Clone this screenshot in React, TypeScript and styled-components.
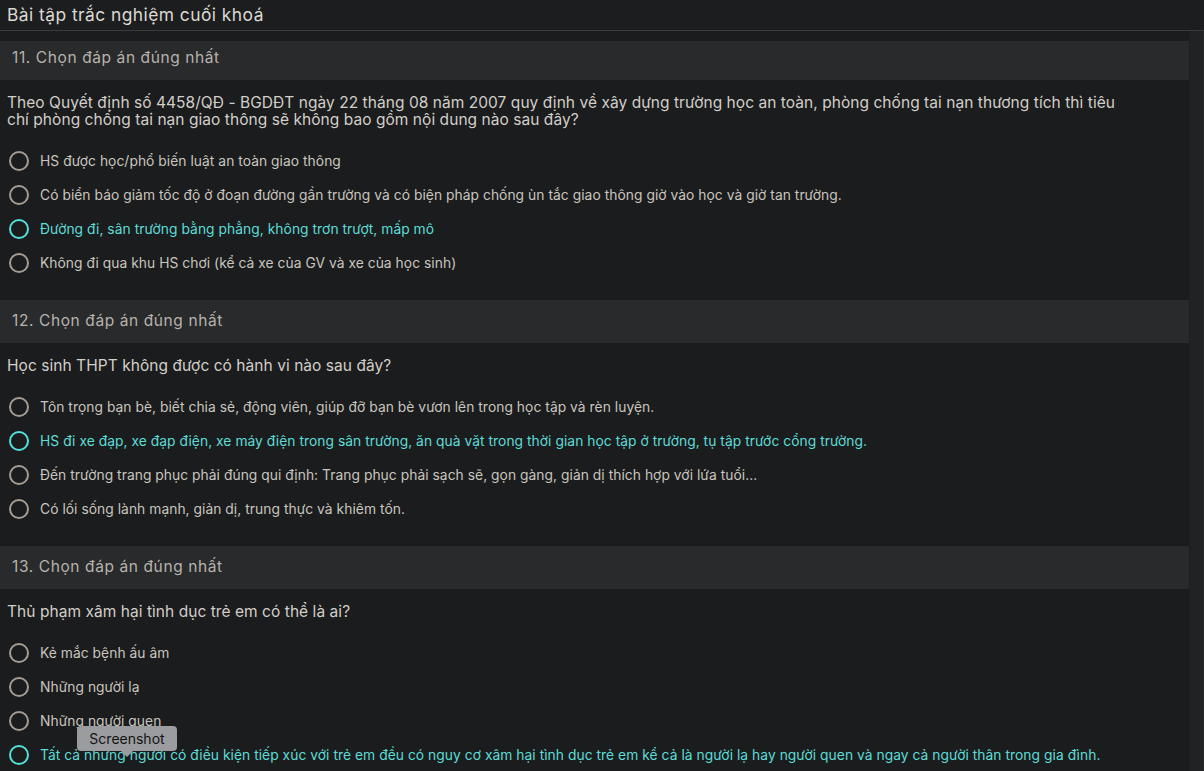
import React from "react";
import styled, { createGlobalStyle } from "styled-components";

const Global = createGlobalStyle`
  html, body { margin: 0; padding: 0; background: #1b1c1e; }
  body { font-family: Inter, "Noto Sans", "Liberation Sans", sans-serif; overflow: hidden; }
  * { box-sizing: border-box; }
`;

const Page = styled.div`
  width: 1204px;
  height: 771px;
  display: flex;
  flex-direction: column;
  background: #1b1c1e;
  position: relative;
  overflow: hidden;
`;

const TitleBar = styled.div`
  height: 31px;
  flex: none;
  display: flex;
  align-items: center;
  padding: 0 7px 2px;
  border-bottom: 1px solid #3a3b3d;
  background: #1c1d1f;
  color: #dcd8d2;
  font-size: 17.4px;
  letter-spacing: 0.45px;
`;

const Body = styled.div`
  flex: 1;
  display: flex;
  min-height: 0;
`;

const Content = styled.div`
  flex: 1;
  padding-top: 10px;
  display: flex;
  flex-direction: column;
  gap: 20px;
`;

const Gutter = styled.div`
  width: 15px;
  flex: none;
  background: #212224;
  border-left: 1px solid #1e1f21;
  border-right: 1px solid #2a2b2d;
`;

const Section = styled.section`
  display: flex;
  flex-direction: column;
`;

const SectionHeader = styled.div<{ $first?: boolean }>`
  height: ${(p) => (p.$first ? 39 : 43)}px;
  display: flex;
  align-items: center;
  padding: ${(p) => (p.$first ? "0 12px 6px" : "0 12px 2px")};
  background: #292a2c;
  color: #b7b2ab;
  font-size: 15.5px;
  letter-spacing: 0.6px;
`;

const Question = styled.div`
  padding: 14px 58px 0 7px;
  color: #d2cec8;
  font-size: 15.5px;
  line-height: 17px;
  letter-spacing: 0.05px;
  margin-bottom: 16px;
`;

const Options = styled.div`
  display: flex;
  flex-direction: column;
`;

const Option = styled.label<{ $selected?: boolean }>`
  height: 34px;
  display: flex;
  align-items: center;
  gap: 11px;
  padding-left: 9px;
  color: ${(p) => (p.$selected ? "#5ddcd6" : "#c9c5bf")};
  font-size: 13.8px;
  letter-spacing: 0.05px;
  white-space: nowrap;
`;

const Radio = styled.span<{ $selected?: boolean }>`
  width: 20px;
  height: 20px;
  flex: none;
  border-radius: 50%;
  border: 2px solid ${(p) => (p.$selected ? "#55e0da" : "#a59d94")};
`;

const Tooltip = styled.div`
  position: absolute;
  left: 77px;
  top: 726px;
  width: 100px;
  height: 25px;
  border-radius: 4px;
  background: #9a9c9f;
  color: #141414;
  font-size: 14px;
  display: flex;
  align-items: center;
  justify-content: center;
  padding-bottom: 1px;
  &::after {
    content: "";
    position: absolute;
    left: 44px;
    bottom: -6px;
    border-left: 6px solid transparent;
    border-right: 6px solid transparent;
    border-top: 6px solid #9a9c9f;
  }
`;

type Q = { num: number; text: string; options: string[]; selected: number };

const questions: Q[] = [
  {
    num: 11,
    text:
      "Theo Quyết định số 4458/QĐ - BGDĐT ngày 22 tháng 08 năm 2007 quy định về xây dựng trường học an toàn, phòng chống tai nạn thương tích thì tiêu chí phòng chống tai nạn giao thông sẽ không bao gồm nội dung nào sau đây?",
    options: [
      "HS được học/phổ biến luật an toàn giao thông",
      "Có biển báo giảm tốc độ ở đoạn đường gần trường và có biện pháp chống ùn tắc giao thông giờ vào học và giờ tan trường.",
      "Đường đi, sân trường bằng phẳng, không trơn trượt, mấp mô",
      "Không đi qua khu HS chơi (kể cả xe của GV và xe của học sinh)",
    ],
    selected: 2,
  },
  {
    num: 12,
    text: "Học sinh THPT không được có hành vi nào sau đây?",
    options: [
      "Tôn trọng bạn bè, biết chia sẻ, động viên, giúp đỡ bạn bè vươn lên trong học tập và rèn luyện.",
      "HS đi xe đạp, xe đạp điện, xe máy điện trong sân trường, ăn quà vặt trong thời gian học tập ở trường, tụ tập trước cổng trường.",
      "Đến trường trang phục phải đúng qui định: Trang phục phải sạch sẽ, gọn gàng, giản dị thích hợp với lứa tuổi...",
      "Có lối sống lành mạnh, giản dị, trung thực và khiêm tốn.",
    ],
    selected: 1,
  },
  {
    num: 13,
    text: "Thủ phạm xâm hại tình dục trẻ em có thể là ai?",
    options: [
      "Kẻ mắc bệnh ấu âm",
      "Những người lạ",
      "Những người quen",
      "Tất cả những người có điều kiện tiếp xúc với trẻ em đều có nguy cơ xâm hại tình dục trẻ em kể cả là người lạ hay người quen và ngay cả người thân trong gia đình.",
    ],
    selected: 3,
  },
];

export default function App() {
  return (
    <>
      <Global />
      <Page>
        <TitleBar>Bài tập trắc nghiệm cuối khoá</TitleBar>
        <Body>
          <Content>
            {questions.map((q, qi) => (
              <Section key={q.num}>
                <SectionHeader $first={qi === 0}>{q.num}. Chọn đáp án đúng nhất</SectionHeader>
                <Question>{q.text}</Question>
                <Options>
                  {q.options.map((o, i) => (
                    <Option key={i} $selected={i === q.selected}>
                      <Radio $selected={i === q.selected} />
                      {o}
                    </Option>
                  ))}
                </Options>
              </Section>
            ))}
          </Content>
          <Gutter />
        </Body>
        <Tooltip>Screenshot</Tooltip>
      </Page>
    </>
  );
}
